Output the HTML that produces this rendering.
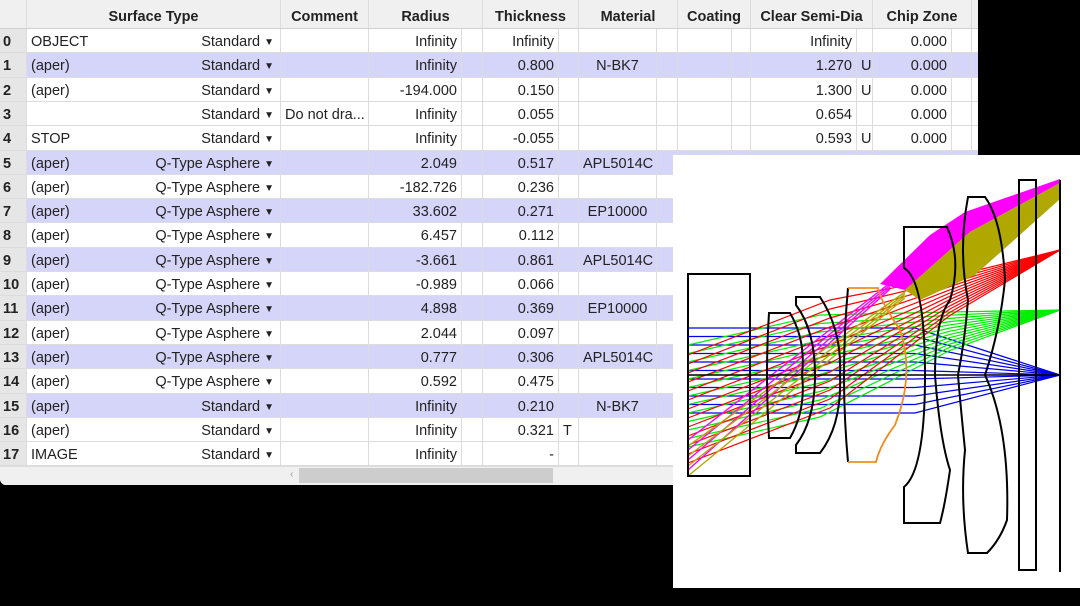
<!DOCTYPE html>
<html><head><meta charset="utf-8"><style>
*{margin:0;padding:0;box-sizing:border-box}
body{width:1080px;height:606px;background:#000;overflow:hidden;position:relative;font-family:"Liberation Sans",sans-serif;font-size:14.5px;color:#222}
#tbl{position:absolute;left:0;top:0;width:978px;height:485px;background:#fff;border-bottom-left-radius:6px;overflow:hidden}
.row{position:absolute;left:0;width:978px;height:24.4px;border-bottom:1px solid #dcdcdc}
.row div{position:absolute;top:0;height:100%;line-height:26px;border-right:1px solid #dcdcdc;white-space:nowrap;overflow:hidden;padding:0 4px}
.hd{background:#f0f0f0;height:29px!important;border-bottom:1px solid #d0d0d0}
.hd div{line-height:34px;font-weight:bold;text-align:center;color:#222}
.lav{background:#d5d5f9}
.r{text-align:right}.c{text-align:center}
.ix{background:#e6e6e6;font-weight:bold;padding:0 3px!important}
.ar{font-size:10px;vertical-align:1px;margin-left:4px}
#sb{position:absolute;left:0;top:466px;width:978px;height:19px;background:#f0f0f0;border-top:1px solid #ddd}
#th{position:absolute;left:299px;top:468px;width:254px;height:15px;background:#cdcdcd}
#pan{position:absolute;left:673px;top:155px;width:407px;height:433px;background:#fff}
</style></head><body>
<div id="tbl">
<div class="row hd" style="top:0">
<div class="ix" style="left:0;width:27px;background:#f0f0f0"></div>
<div style="left:27px;width:254px">Surface Type</div>
<div style="left:281px;width:88px">Comment</div>
<div style="left:369px;width:114px">Radius</div>
<div style="left:483px;width:96px">Thickness</div>
<div style="left:579px;width:99px">Material</div>
<div style="left:678px;width:73px">Coating</div>
<div style="left:751px;width:122px">Clear Semi-Dia</div>
<div style="left:873px;width:99px">Chip Zone</div>
<div style="left:972px;width:6px"></div>
</div>
<div id="rows"></div>
<div id="sb"></div><div id="th"></div>
<div style="position:absolute;left:290px;top:469px;font-size:10px;color:#999">‹</div>
</div>

<div id="pan">
<svg id="sv" width="407" height="433" viewBox="673 155 407 433" xmlns="http://www.w3.org/2000/svg" fill="none" stroke-width="1.2">
<g id="rays"></g>
<polygon fill="#ff00ff" points="880,284 930,235 965,212 1060,179 1060,183 970,232 905,290"/>
<polygon fill="#b0a800" points="905,290 970,232 1060,183 1060,199 975,275 920,300"/>
<g stroke="#000" stroke-width="2">
<rect x="688" y="274" width="62" height="202"/>
<path d="M769,313 H790 Q806,340 802,375 Q806,410 790,438 H769 Q765,375 769,313 Z"/>
<path d="M796,297 H820 Q842,330 840,375 Q842,425 820,453 H796 V445 Q815,420 815,375 Q815,330 796,305 Z"/>
<path d="M848,288 Q840,375 848,462"/>
<path d="M904,227 H947 Q962,260 950,300 Q935,320 935,375 Q940,440 950,470 Q945,505 940,523 H904 V487 Q925,470 925,375 Q925,280 904,268 Z"/>
<path d="M968,197 H985 Q1002,220 1005,280 Q1000,330 985,375 Q1010,430 1007,520 Q1000,540 987,553 H968 Q960,500 965,450 Q960,400 958,375 Q965,340 968,300 Q958,250 968,197 Z"/>
<rect x="1019" y="180" width="17" height="390"/>
<line x1="1060" y1="180" x2="1060" y2="572"/>
<line x1="688" y1="375" x2="1060" y2="375" stroke-width="1.5"/>
</g>
<path d="M848,462 H876 Q880,445 895,425 Q915,375 900,330 Q880,300 878,288 H848" stroke="#f08c20" stroke-width="1.8"/>
</svg>
</div>

<script>
var d=[
["0","OBJECT","Standard","","Infinity","Infinity","","","","Infinity","","0.000",0],
["1","(aper)","Standard","","Infinity","0.800","","N-BK7","","1.270","U","0.000",1],
["2","(aper)","Standard","","-194.000","0.150","","","","1.300","U","0.000",0],
["3","","Standard","Do not dra...","Infinity","0.055","","","","0.654","","0.000",0],
["4","STOP","Standard","","Infinity","-0.055","","","","0.593","U","0.000",0],
["5","(aper)","Q-Type Asphere","","2.049","0.517","","APL5014C","","","","",1],
["6","(aper)","Q-Type Asphere","","-182.726","0.236","","","","","","",0],
["7","(aper)","Q-Type Asphere","","33.602","0.271","","EP10000","","","","",1],
["8","(aper)","Q-Type Asphere","","6.457","0.112","","","","","","",0],
["9","(aper)","Q-Type Asphere","","-3.661","0.861","","APL5014C","","","","",1],
["10","(aper)","Q-Type Asphere","","-0.989","0.066","","","","","","",0],
["11","(aper)","Q-Type Asphere","","4.898","0.369","","EP10000","","","","",1],
["12","(aper)","Q-Type Asphere","","2.044","0.097","","","","","","",0],
["13","(aper)","Q-Type Asphere","","0.777","0.306","","APL5014C","","","","",1],
["14","(aper)","Q-Type Asphere","","0.592","0.475","","","","","","",0],
["15","(aper)","Standard","","Infinity","0.210","","N-BK7","","","","",1],
["16","(aper)","Standard","","Infinity","0.321","T","","","","","",0],
["17","IMAGE","Standard","","Infinity","-","","","","","","",0]];
var h="";
d.forEach(function(r,i){
var t=29+i*24.3;
h+='<div class="row'+(r[12]?' lav':'')+'" style="top:'+t+'px">'+
'<div class="ix" style="left:0;width:27px">'+r[0]+'</div>'+
'<div style="left:27px;width:254px">'+r[1]+'<span style="position:absolute;right:6px">'+r[2]+'<span class="ar">▼</span></span></div>'+
'<div style="left:281px;width:88px">'+r[3]+'</div>'+
'<div class="r" style="left:369px;width:93px">'+r[4]+'</div>'+
'<div style="left:462px;width:21px"></div>'+
'<div class="r" style="left:483px;width:76px">'+r[5]+'</div>'+
'<div style="left:559px;width:20px">'+r[6]+'</div>'+
'<div class="c" style="left:579px;width:78px">'+r[7]+'</div>'+
'<div style="left:657px;width:21px"></div>'+
'<div style="left:678px;width:54px"></div>'+
'<div style="left:732px;width:19px"></div>'+
'<div class="r" style="left:751px;width:106px">'+r[9]+'</div>'+
'<div style="left:857px;width:16px">'+r[10]+'</div>'+
'<div class="r" style="left:873px;width:79px">'+r[11]+'</div>'+
'<div style="left:952px;width:20px"></div>'+
'</div>';});
document.getElementById("rows").innerHTML=h;
var s="";
function pl(c,p,w){s+='<polyline stroke="'+c+'" stroke-width="'+(w||1.2)+'" points="'+p+'"/>';}
for(var k=0;k<11;k++){var y=328+k*8.5;pl("#0000ee","688,"+y+" 915,"+y+" 1060,375");}
for(var k=0;k<13;k++){var y=345+k*8.5;pl("#00ee00","688,"+y+" 820,"+(y-30)+" 950,"+(312+k*3.2)+" 1060,310");}
for(var k=0;k<13;k++){var y=355+k*9;pl("#ff0000","688,"+y+" 830,"+(y-55)+" 950,"+(277+k*3.2)+" 1060,250");}
for(var k=0;k<4;k++){var y=440+k*10;pl("#ff00ff","688,"+y+" 890,"+(283+k*2),1.4);}
for(var k=0;k<4;k++){var y=446+k*10;pl("#b0a800","688,"+y+" 905,"+(292+k*2),1.4);}
document.getElementById("rays").innerHTML=s;
</script>
</body></html>
